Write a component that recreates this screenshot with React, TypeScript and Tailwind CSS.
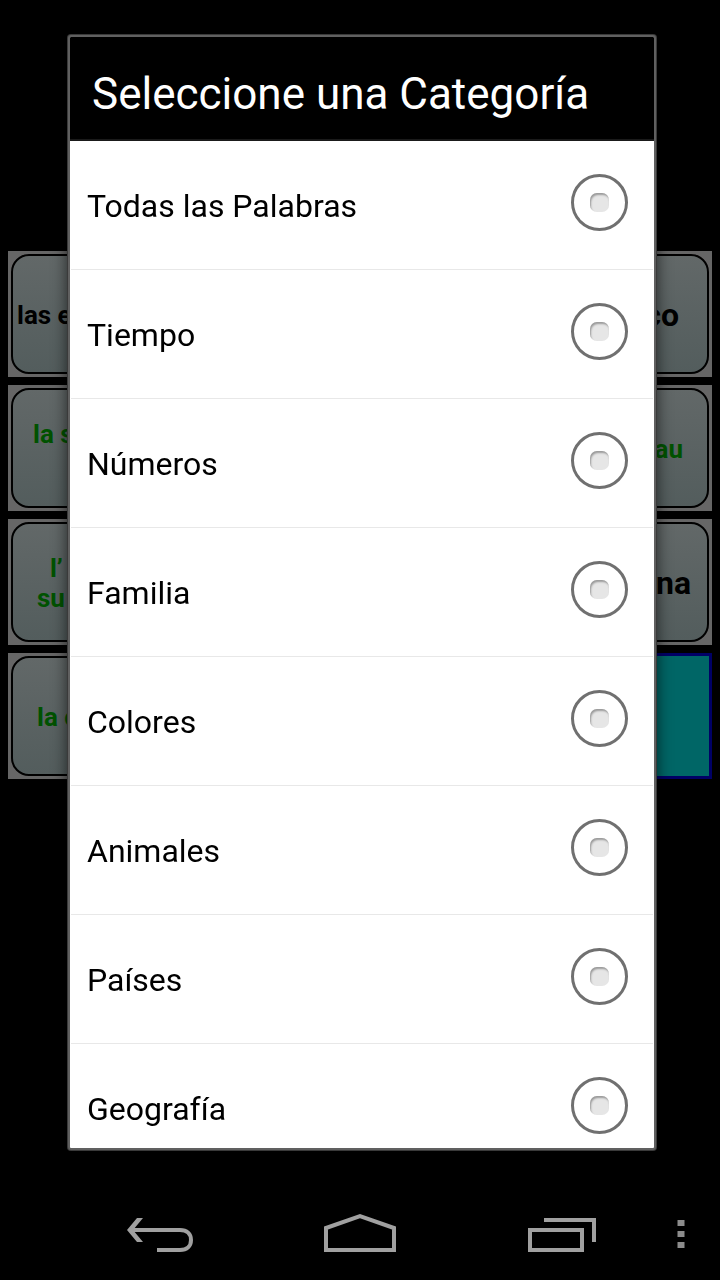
import clsx from 'clsx';

type Tone = 'source' | 'target' | 'selected';

interface Card {
  text: string;
  tone: Tone;
  className?: string;
}

const categories = [
  'Todas las Palabras',
  'Tiempo',
  'Números',
  'Familia',
  'Colores',
  'Animales',
  'Países',
  'Geografía',
];

// Each row holds the leftmost and rightmost card, the dialog covers the middle.
const rows: [Card, Card][] = [
  [
    { text: 'las e', tone: 'source', className: 'justify-start pl-1 text-[26px]' },
    { text: 'co', tone: 'source', className: 'justify-end pr-7 text-[32px]' },
  ],
  [
    { text: 'la s\n\u00a0', tone: 'target', className: 'justify-start pl-5 text-[26px]' },
    { text: 'au', tone: 'target', className: 'justify-end pr-6 text-[26px]' },
  ],
  [
    { text: '\u00a0\u00a0l’\nsu', tone: 'target', className: 'justify-start pl-6 text-[26px]' },
    { text: 'na', tone: 'source', className: 'justify-end pr-4 text-[32px]' },
  ],
  [
    { text: 'la c', tone: 'target', className: 'justify-start pl-6 text-[26px]' },
    { text: '', tone: 'selected' },
  ],
];

function WordCard({ text, tone, className }: Card) {
  if (tone === 'selected') {
    return (
      <button
        type="button"
        aria-label="Seleccionada"
        className="h-[126px] w-[170px] border-[3px] border-[#000066] bg-[#006666]"
      />
    );
  }

  return (
    <button type="button" className="h-[126px] w-[170px] bg-[#666666] p-[3px]">
      <span
        className={clsx(
          'flex h-full items-center whitespace-pre rounded-[18px] border-2 border-black bg-linear-to-b from-[#626868] to-[#535d5d] pt-0.5 text-left font-bold leading-[30px]',
          tone === 'target' ? 'text-[#005200]' : 'text-black',
          className,
        )}
      >
        {text}
      </span>
    </button>
  );
}

function CategoryOption({ label }: { label: string }) {
  return (
    <label className="mx-px flex h-[129px] shrink-0 items-center justify-between border-b border-[#e8e8e8] pl-4 pr-[25px] pt-0.5 text-[32px] text-black">
      {label}
      <input
        type="radio"
        name="category"
        className="mb-2 flex size-[57px] appearance-none items-center justify-center rounded-full border-[3px] border-[#707070] before:size-[19px] before:rounded-[7px] before:bg-[#e6e6e6] before:shadow-[inset_1px_2px_2px_#9a9a9a] before:content-[''] checked:before:bg-[#33b5e5]"
      />
    </label>
  );
}

function NavBar() {
  return (
    <nav className="flex h-24 items-center bg-black pl-[60px] text-[#a0a0a0]">
      <button type="button" aria-label="Atrás" className="flex flex-1 justify-center">
        <svg width="68" height="40" viewBox="0 0 68 40" fill="none" stroke="currentColor" strokeWidth="4">
          <path d="M6 18H54C61 18 65 22 65 28C65 34 61 38 54 38H31" />
          <path d="M11 6H17L7 18L17 30H11L1 18Z" fill="currentColor" stroke="none" />
        </svg>
      </button>
      <button type="button" aria-label="Inicio" className="flex flex-1 justify-center">
        <svg width="72" height="40" viewBox="0 0 72 40" fill="none" stroke="currentColor" strokeWidth="4">
          <path d="M2 38V16L36 4L70 16V38Z" />
        </svg>
      </button>
      <button type="button" aria-label="Recientes" className="flex flex-1 justify-center">
        <svg width="72" height="40" viewBox="0 0 72 40" fill="none" stroke="currentColor" strokeWidth="4">
          <path d="M6 18H58V38H6Z" />
          <path d="M20 8H70V30" />
        </svg>
      </button>
      <button type="button" aria-label="Menú" className="flex w-[60px] justify-center pr-[18px] text-[#8c8c8c]">
        <svg width="8" height="40" viewBox="0 0 8 40" fill="currentColor">
          <path d="M0.500 8H7.500V14H0.500ZM0.500 19H7.500V25H0.500ZM0.500 30H7.500V36H0.500Z" />
        </svg>
      </button>
    </nav>
  );
}

export default function App() {
  return (
    <div className="flex h-screen flex-col bg-black font-[Roboto,sans-serif]">
      <main className="flex flex-1 flex-col gap-2 px-2 pt-[251px]">
        {rows.map(([left, right], i) => (
          <div key={i} className="flex justify-between">
            <WordCard {...left} />
            <WordCard {...right} />
          </div>
        ))}
      </main>

      <NavBar />

      <div className="pointer-events-none fixed inset-0 flex flex-col pt-[35px] pr-[64px] pb-[130px] pl-[68px]">
        <div
          role="dialog"
          aria-labelledby="dialog-title"
          className="pointer-events-auto flex min-h-0 flex-1 flex-col overflow-hidden rounded-[3px] border-2 border-[#606060] bg-white shadow-[0_0_16px_rgba(0,0,0,0.7)] ring-1 ring-[#3a3a3a]"
        >
          <h1
            id="dialog-title"
            className="flex h-[104px] shrink-0 items-center border-b-2 border-[#1a1a1a] bg-black px-[22px] pt-3 text-[44px] text-white"
          >
            Seleccione una Categoría
          </h1>
          <div className="flex min-h-0 flex-1 flex-col overflow-hidden">
            {categories.map((label) => (
              <CategoryOption key={label} label={label} />
            ))}
          </div>
        </div>
      </div>
    </div>
  );
}
